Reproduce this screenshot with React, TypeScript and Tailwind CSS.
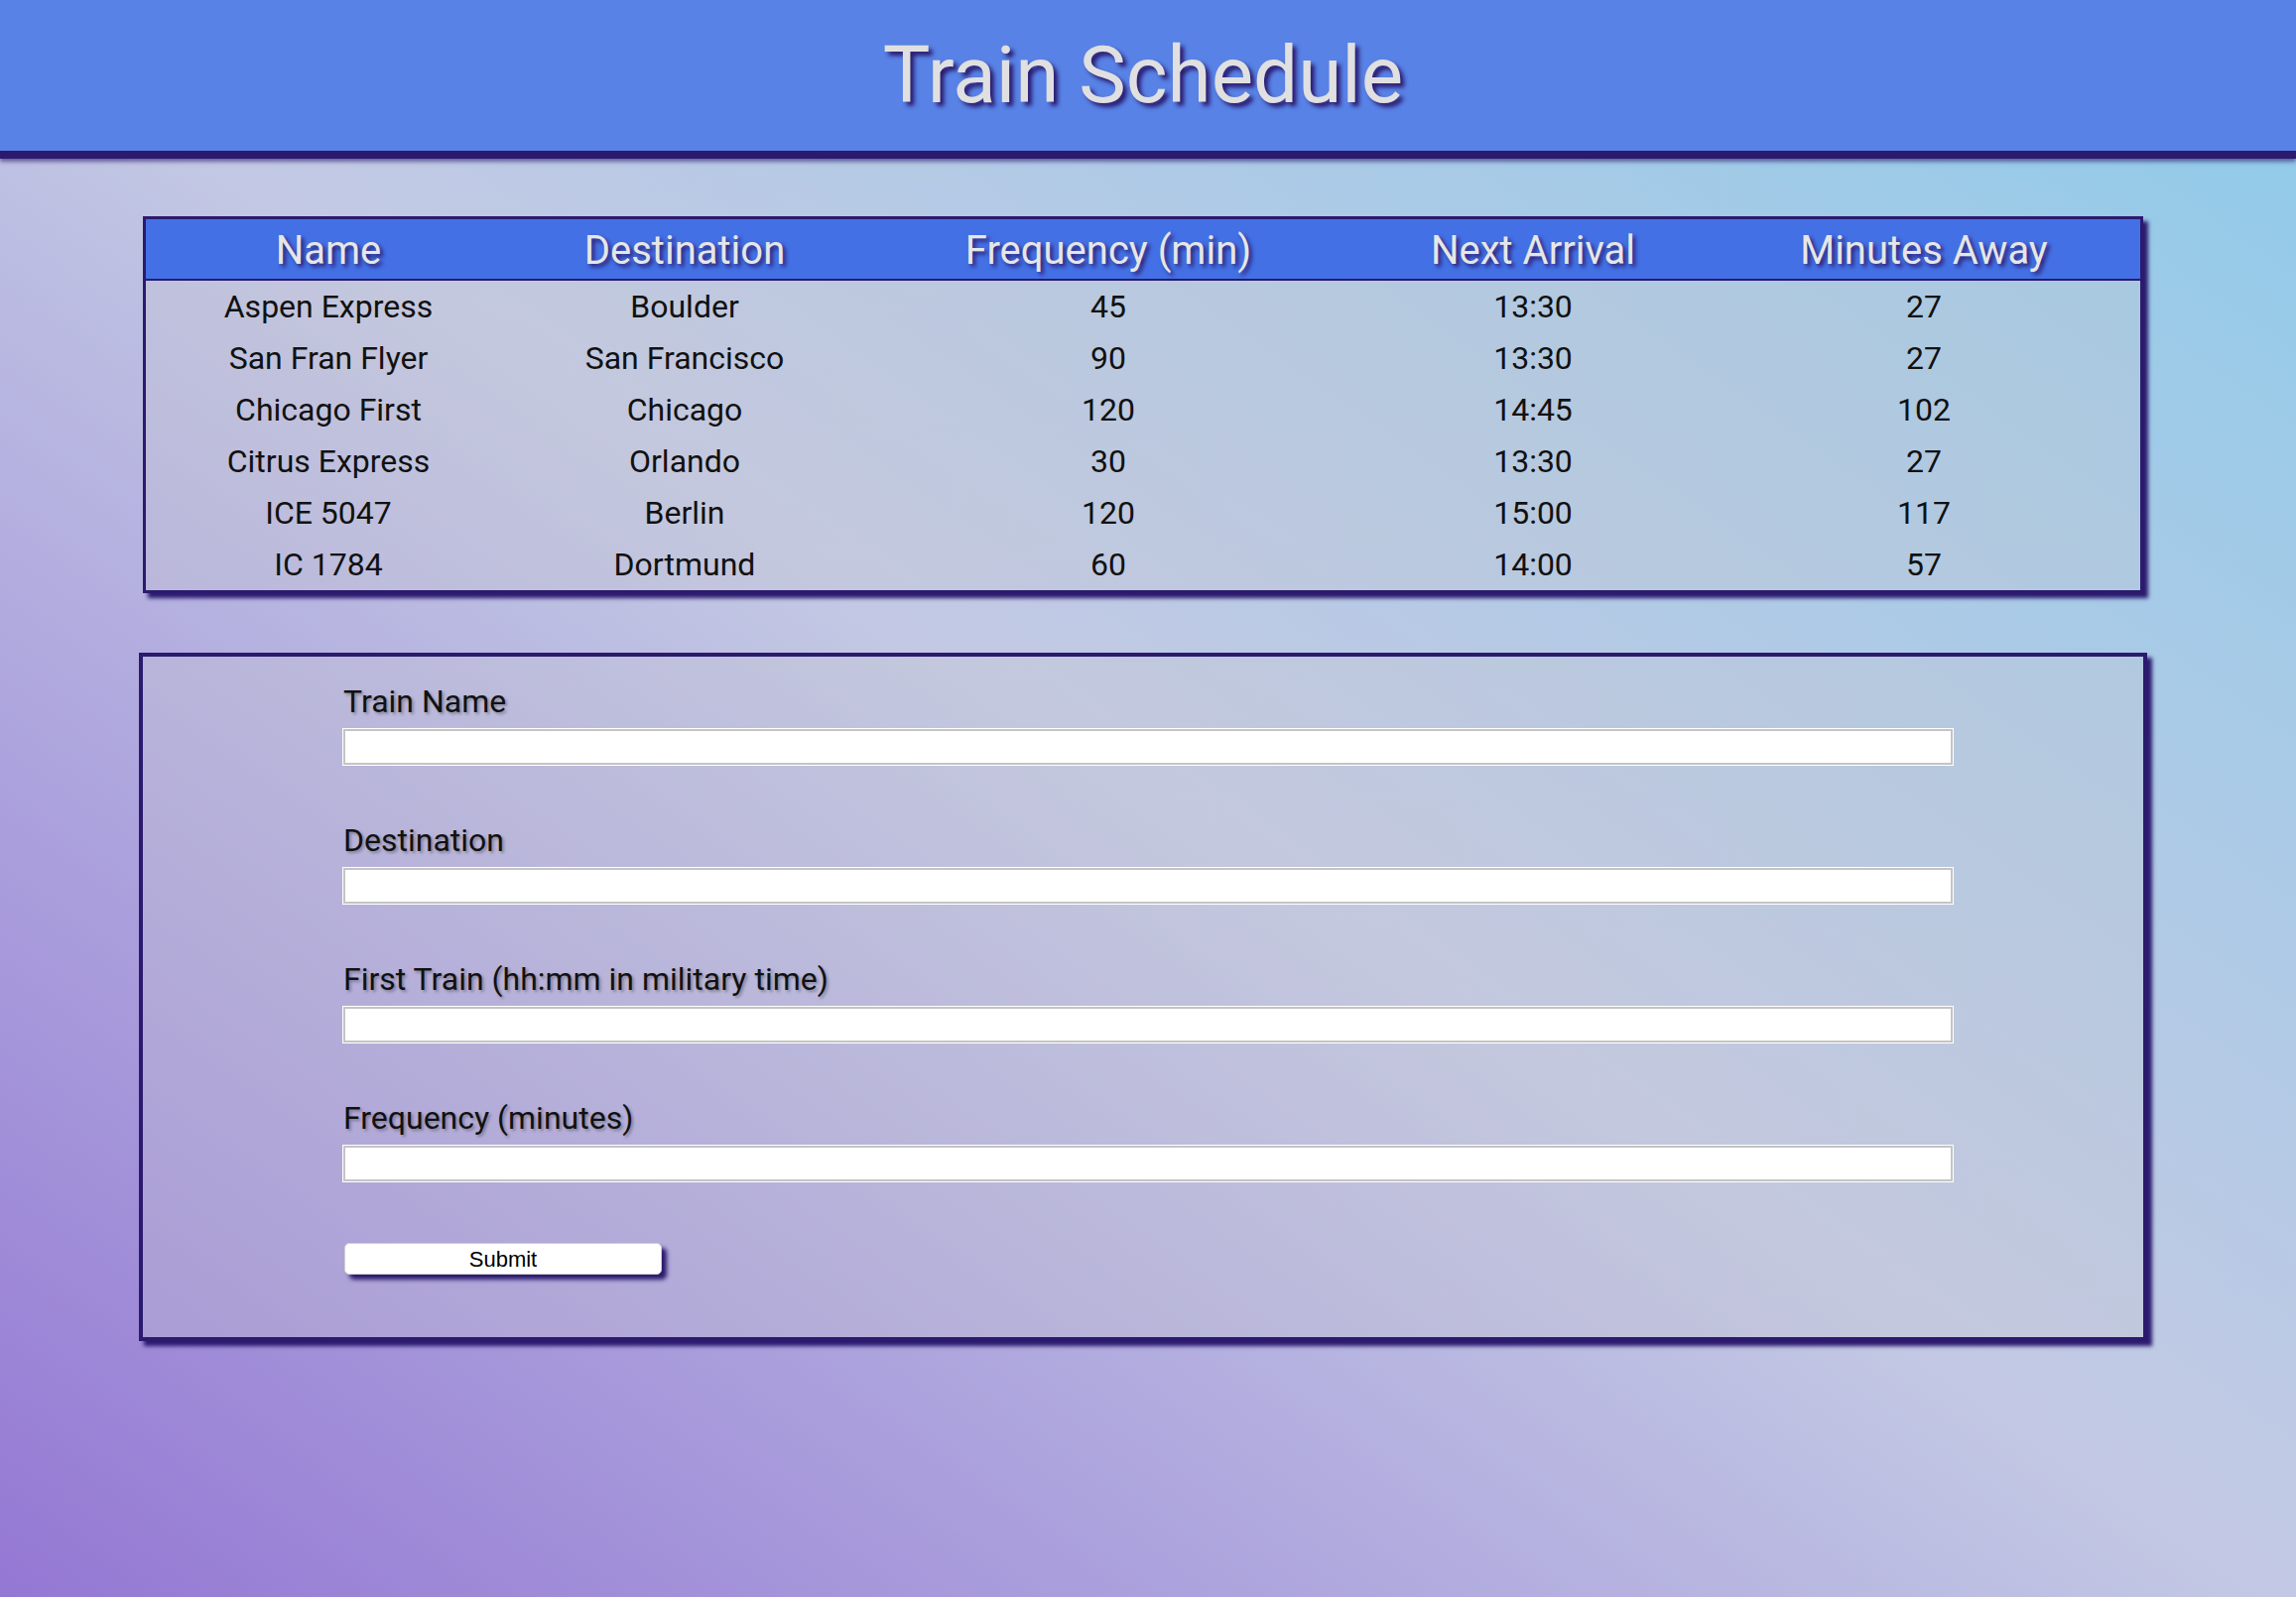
import React from "react";

const rows = [
  ["Aspen Express", "Boulder", "45", "13:30", "27"],
  ["San Fran Flyer", "San Francisco", "90", "13:30", "27"],
  ["Chicago First", "Chicago", "120", "14:45", "102"],
  ["Citrus Express", "Orlando", "30", "13:30", "27"],
  ["ICE 5047", "Berlin", "120", "15:00", "117"],
  ["IC 1784", "Dortmund", "60", "14:00", "57"],
];

const heads = ["Name", "Destination", "Frequency (min)", "Next Arrival", "Minutes Away"];

const fields = [
  "Train Name",
  "Destination",
  "First Train (hh:mm in military time)",
  "Frequency (minutes)",
];

export default function App() {
  return (
    <div className="min-h-screen w-full bg-linear-to-tr from-[#9477d3] via-[#c3c9e4] to-[#8ccbe9] font-[Roboto,sans-serif] pb-[258px]">
      <header className="h-[160px] bg-[#5882e6] border-b-[8px] border-[#2b1a6e] shadow-[0_3px_4px_rgba(43,26,110,0.6)] flex items-center justify-center">
        <h1 className="text-[80px] leading-[80px] text-[#e0e0e0] [text-shadow:4px_4px_4px_#2b1a6e] pr-[10px]">
          Train Schedule
        </h1>
      </header>

      <div className="mt-[58px] ml-[144px] w-[2016px] border-[3px] border-[#2b1a6e] shadow-[5px_5px_4px_#2b1a6e] bg-[#c8c8d2]/30">
        <table className="w-full table-fixed border-collapse">
          <colgroup>
            <col className="w-[368px]" />
            <col className="w-[350px]" />
            <col className="w-[504px]" />
            <col className="w-[352px]" />
            <col className="w-[436px]" />
          </colgroup>
          <thead>
            <tr className="bg-[#4371e5] border-b-2 border-[#2b1a6e]">
              {heads.map((h) => (
                <th
                  key={h}
                  className="h-[60px] p-0 pt-[4px] text-[40px] leading-[56px] font-normal text-[#e6e6e6] [text-shadow:3px_3px_4px_#2b1a6e] text-center"
                >
                  {h}
                </th>
              ))}
            </tr>
          </thead>
          <tbody>
            {rows.map((r, i) => (
              <tr key={i}>
                {r.map((c, j) => (
                  <td key={j} className="h-[52px] p-0 text-[32px] leading-[52px] text-[#111] text-center">
                    {c}
                  </td>
                ))}
              </tr>
            ))}
          </tbody>
        </table>
      </div>

      <form
        className="mt-[60px] ml-[140px] w-[2024px] border-[4px] border-[#2b1a6e] shadow-[5px_5px_4px_#2b1a6e] bg-[#c8c8d2]/30 pt-[26px] pb-[63px] pl-[202px] flex flex-col items-start"
        onSubmit={(e) => e.preventDefault()}
      >
        {fields.map((f, i) => (
          <div key={f} className={i === 0 ? "flex flex-col" : "flex flex-col mt-[57px]"}>
            <label className="text-[32px] leading-[38px] text-[#111] [text-shadow:2px_2px_3px_rgba(0,0,0,0.3)]">
              {f}
            </label>
            <input
              type="text"
              className="mt-[9px] w-[1622px] h-[36px] bg-white border-2 border-[#c4c4c4] shadow-[0_0_0_1px_#ffffff] outline-none"
            />
          </div>
        ))}
        <button
          type="submit"
          className="mt-[62px] ml-[1px] w-[320px] h-[32px] bg-white rounded-[5px] border border-[#d0d0d0] shadow-[5px_5px_4px_#2b1a6e] font-[Liberation_Sans,Arial,sans-serif] text-[22px] leading-[32px] text-black"
        >
          Submit
        </button>
      </form>
    </div>
  );
}
